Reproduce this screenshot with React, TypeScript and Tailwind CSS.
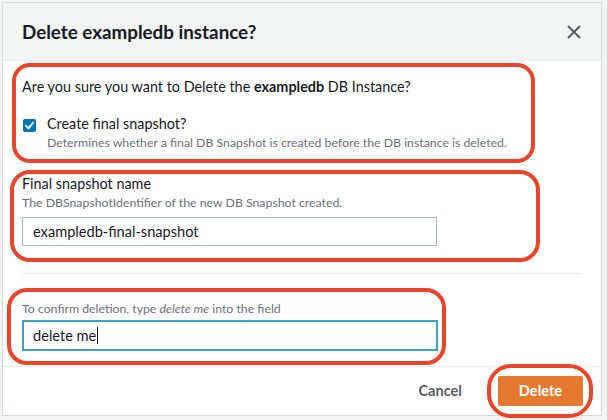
import React from "react";

const font = { fontFamily: "Lato, Roboto, sans-serif" };

function CheckIcon() {
  return (
    <svg viewBox="0 0 14 14" className="h-[13px] w-[13px]">
      <path
        d="M3 7.2 L5.8 10 L11 4"
        fill="none"
        stroke="#ffffff"
        strokeWidth="2"
        strokeLinecap="round"
        strokeLinejoin="round"
      />
    </svg>
  );
}

function CloseIcon() {
  return (
    <svg viewBox="0 0 14 14" className="h-[14px] w-[14px]">
      <path
        d="M1.5 1.5 L12.5 12.5 M12.5 1.5 L1.5 12.5"
        stroke="#545b64"
        strokeWidth="2"
        strokeLinecap="round"
      />
    </svg>
  );
}

export default function App() {
  return (
    <div
      className="min-h-screen bg-[#f4f4f4] pl-[2px] pt-[2px] text-[#16191f]"
      style={font}
    >
      <div className="relative w-[600px] border border-[#d5dbdb] bg-white">
        {/* Header */}
        <div className="flex h-[58px] items-center justify-between border-b border-[#eaeded] bg-[#f2f3f3] pl-[19px] pr-[20px]">
          <h1 className="text-[18.8px] font-bold leading-[22px] text-[#16191f]">
            Delete exampledb instance?
          </h1>
          <CloseIcon />
        </div>

        {/* Body */}
        <div className="px-[19px] pb-[15px] pt-[15px]">
          <p className="text-[14.4px] leading-[22px]">
            Are you sure you want to Delete the <b>exampledb</b> DB Instance?
          </p>

          <div className="mt-[15px] flex items-start gap-[11px] pl-[1px]">
            <div className="mt-[6px] flex h-[13px] w-[13px] shrink-0 items-center justify-center rounded-[2px] bg-[#0073bb]">
              <CheckIcon />
            </div>
            <div>
              <p className="text-[14.4px] leading-[22px]">Create final snapshot?</p>
              <p className="text-[12.3px] leading-[16px] text-[#687078]">
                Determines whether a final DB Snapshot is created before the DB
                instance is deleted.
              </p>
            </div>
          </div>

          <p className="mt-[22px] text-[14.4px] leading-[22px]">Final snapshot name</p>
          <p className="text-[12.3px] leading-[16px] text-[#687078]">
            The DBSnapshotIdentifier of the new DB Snapshot created.
          </p>
          <div className="mt-[6px] flex h-[29px] w-[415px] items-center border border-[#aab7b8] pl-[10px] text-[14.6px]">
            exampledb-final-snapshot
          </div>

          <div className="mt-[27px] h-px bg-[#eaeded]" />

          <p className="mt-[27px] text-[12.3px] leading-[16px] text-[#687078]">
            To confirm deletion, type <i>delete me</i> into the field
          </p>
          <div className="mt-[3px] flex h-[31px] w-[416px] items-center border-2 border-[#3d9fcc] pl-[9px] text-[14.6px]">
            delete me
            <span className="ml-px h-[17px] w-px bg-[#16191f]" />
          </div>
        </div>

        {/* Footer */}
        <div className="flex h-[49px] items-center justify-end gap-[16px] border-t border-[#eaeded] pr-[18px]">
          <button className="px-[20px] text-[14.6px] font-bold text-[#545b64]">
            Cancel
          </button>
          <button className="h-[30px] w-[85px] rounded-[2px] bg-[#e5782f] text-[14.6px] font-bold text-white">
            Delete
          </button>
        </div>

        {/* Annotation rings */}
        <div className="pointer-events-none absolute left-[9px] top-[60px] h-[100px] w-[523px] rounded-[18px] border-[4px] border-[#e8452c]" />
        <div className="pointer-events-none absolute left-[7px] top-[167px] h-[92px] w-[530px] rounded-[20px] border-[4px] border-[#e8452c]" />
        <div className="pointer-events-none absolute left-[4px] top-[285px] h-[77px] w-[439px] rounded-[20px] border-[4px] border-[#e8452c]" />
        <div className="pointer-events-none absolute left-[484px] top-[361px] h-[54px] w-[106px] rounded-[24px] border-[4px] border-[#e8452c]" />
      </div>
    </div>
  );
}
